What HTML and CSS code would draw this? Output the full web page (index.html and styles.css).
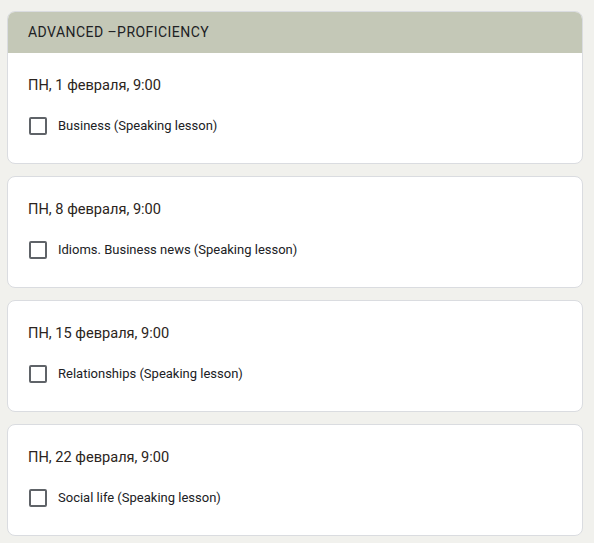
FILE: index.html
```html
<!DOCTYPE html>
<html lang="ru">
<head>
<meta charset="utf-8">
<link rel="stylesheet" href="styles.css">
</head>
<body>
<main class="page">
  <section class="card">
    <header class="card-head">ADVANCED –PROFICIENCY</header>
    <div class="card-body">
      <div class="date">ПН, 1 февраля, 9:00</div>
      <label class="item"><span class="box"></span><span>Business (Speaking lesson)</span></label>
    </div>
  </section>
  <section class="card">
    <div class="card-body">
      <div class="date">ПН, 8 февраля, 9:00</div>
      <label class="item"><span class="box"></span><span>Idioms. Business news (Speaking lesson)</span></label>
    </div>
  </section>
  <section class="card">
    <div class="card-body">
      <div class="date">ПН, 15 февраля, 9:00</div>
      <label class="item"><span class="box"></span><span>Relationships (Speaking lesson)</span></label>
    </div>
  </section>
  <section class="card">
    <div class="card-body">
      <div class="date">ПН, 22 февраля, 9:00</div>
      <label class="item"><span class="box"></span><span>Social life (Speaking lesson)</span></label>
    </div>
  </section>
</main>
</body>
</html>
```
FILE: styles.css
```css
html, body {
  margin: 0;
  background: #f1f1ed;
}
body {
  font-family: Roboto, "Liberation Sans", Arial, sans-serif;
  color: #202124;
}
.page {
  display: flex;
  flex-direction: column;
  gap: 12px;
  padding: 11px 11px 0 7px;
}
.card {
  background: #fff;
  border: 1px solid #dadce0;
  border-radius: 8px;
  overflow: hidden;
}
.card-head {
  background: #c4c8b7;
  height: 42px;
  margin: -1px -1px 0;
  padding: 0 21px;
  display: flex;
  align-items: center;
  font-size: 14px;
  letter-spacing: 0.45px;
  color: #202124;
}
.card-body {
  padding: 23px 20px 28px;
}
.date {
  font-size: 14.6px;
  line-height: 18px;
  color: #2b2420;
}
.item {
  margin-top: 22px;
  display: flex;
  align-items: center;
  gap: 11px;
  font-size: 13px;
  line-height: 19px;
  color: #202124;
}
.box {
  width: 14px;
  height: 14px;
  border: 2px solid #5f6368;
  border-radius: 2px;
  margin-left: 1px;
}
```
